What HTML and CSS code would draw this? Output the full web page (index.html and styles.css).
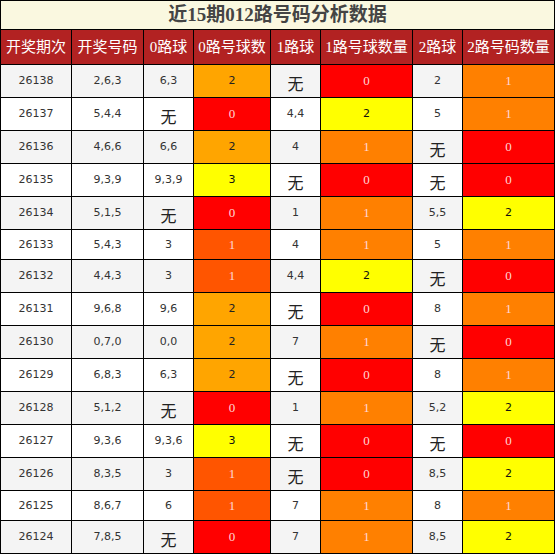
FILE: index.html
```html
<!DOCTYPE html>
<html lang="zh-CN">
<head>
  <meta charset="UTF-8">
  <meta name="viewport" content="width=device-width, initial-scale=1.0">
  <title>近15期012路号码分析数据</title>
  <link rel="stylesheet" href="styles.css">
</head>
<body>
<table class="road-table">
  <colgroup>
    <col class="w71"><col class="w72"><col class="w50"><col class="w77">
    <col class="w50"><col class="w92"><col class="w50"><col class="w92">
  </colgroup>
  <tr>
    <td colspan="8" class="title">近15期012路号码分析数据</td>
  </tr>
  <tr class="head">
    <th>开奖期次</th><th>开奖号码</th><th>0路球</th><th>0路号球数</th>
    <th>1路球</th><th>1路号球数量</th><th>2路球</th><th>2路号码数量</th>
  </tr>
  <tr class="odd">
    <td>26138</td><td>2,6,3</td><td>6,3</td><td class="oa">2</td>
    <td><span class="none">无</span></td><td class="red">0</td><td>2</td><td class="o8">1</td>
  </tr>
  <tr>
    <td>26137</td><td>5,4,4</td><td><span class="none">无</span></td><td class="red">0</td>
    <td>4,4</td><td class="yel">2</td><td>5</td><td class="o8">1</td>
  </tr>
  <tr class="odd">
    <td>26136</td><td>4,6,6</td><td>6,6</td><td class="oa">2</td>
    <td>4</td><td class="o8">1</td><td><span class="none">无</span></td><td class="red">0</td>
  </tr>
  <tr>
    <td>26135</td><td>9,3,9</td><td>9,3,9</td><td class="yel">3</td>
    <td><span class="none">无</span></td><td class="red">0</td><td><span class="none">无</span></td><td class="red">0</td>
  </tr>
  <tr class="odd">
    <td>26134</td><td>5,1,5</td><td><span class="none">无</span></td><td class="red">0</td>
    <td>1</td><td class="o8">1</td><td>5,5</td><td class="yel">2</td>
  </tr>
  <tr>
    <td>26133</td><td>5,4,3</td><td>3</td><td class="o5">1</td>
    <td>4</td><td class="o8">1</td><td>5</td><td class="o8">1</td>
  </tr>
  <tr class="odd">
    <td>26132</td><td>4,4,3</td><td>3</td><td class="o5">1</td>
    <td>4,4</td><td class="yel">2</td><td><span class="none">无</span></td><td class="red">0</td>
  </tr>
  <tr>
    <td>26131</td><td>9,6,8</td><td>9,6</td><td class="oa">2</td>
    <td><span class="none">无</span></td><td class="red">0</td><td>8</td><td class="o8">1</td>
  </tr>
  <tr class="odd">
    <td>26130</td><td>0,7,0</td><td>0,0</td><td class="oa">2</td>
    <td>7</td><td class="o8">1</td><td><span class="none">无</span></td><td class="red">0</td>
  </tr>
  <tr>
    <td>26129</td><td>6,8,3</td><td>6,3</td><td class="oa">2</td>
    <td><span class="none">无</span></td><td class="red">0</td><td>8</td><td class="o8">1</td>
  </tr>
  <tr class="odd">
    <td>26128</td><td>5,1,2</td><td><span class="none">无</span></td><td class="red">0</td>
    <td>1</td><td class="o8">1</td><td>5,2</td><td class="yel">2</td>
  </tr>
  <tr>
    <td>26127</td><td>9,3,6</td><td>9,3,6</td><td class="yel">3</td>
    <td><span class="none">无</span></td><td class="red">0</td><td><span class="none">无</span></td><td class="red">0</td>
  </tr>
  <tr class="odd">
    <td>26126</td><td>8,3,5</td><td>3</td><td class="o5">1</td>
    <td><span class="none">无</span></td><td class="red">0</td><td>8,5</td><td class="yel">2</td>
  </tr>
  <tr>
    <td>26125</td><td>8,6,7</td><td>6</td><td class="o5">1</td>
    <td>7</td><td class="o8">1</td><td>8</td><td class="o8">1</td>
  </tr>
  <tr class="odd">
    <td>26124</td><td>7,8,5</td><td><span class="none">无</span></td><td class="red">0</td>
    <td>7</td><td class="o8">1</td><td>8,5</td><td class="yel">2</td>
  </tr>
</table>
</body>
</html>
```

FILE: styles.css
```css
body{
  margin: 0;
  background: #fff;
}

.road-table{
  width: 555px;
  table-layout: fixed;
  border-collapse: collapse;
  font-family: "DejaVu Sans", "Noto Sans CJK SC", sans-serif;
  font-size: 11px;
  color: #333;
}

.w71{ width: 71px; }
.w72{ width: 72px; }
.w50{ width: 50px; }
.w77{ width: 77px; }
.w92{ width: 92px; }

.road-table td,
.road-table th{
  border: 1px solid #000;
  text-align: center;
  vertical-align: middle;
  padding: 0;
  height: 29px;
  line-height: 16px;
}

/* 标题行 */
.road-table .title{
  background: #faf8e0;
  color: #444;
  font-family: "Liberation Serif", "Noto Sans CJK SC", serif;
  font-weight: bold;
  font-size: 19px;
  line-height: 22px;
  height: 28px;
}

/* 表头 */
.head th{
  background: #b22222;
  color: #fff;
  font-family: "Liberation Serif", "Noto Sans CJK SC", serif;
  font-weight: normal;
  font-size: 15px;
  line-height: 20px;
  height: 34px;
  white-space: nowrap;
}

.odd td{
  background: #f4f4f4;
}

/* “无”字比数字大一号，行也高一些 */
.none{
  display: inline-block;
  vertical-align: top;
  font-family: "Noto Sans CJK SC", sans-serif;
  font-size: 16px;
  line-height: 32px;
  padding-top: 2px;
  height: 30px;
  color: #222;
}

/* 号球数颜色 */
.road-table .red,
.road-table .o5,
.road-table .o8{
  color: #ffd6d6;
  font-family: "Liberation Serif", serif;
  font-size: 13px;
}

.road-table .red{ background: #ff0000; }
.road-table .o5{ background: #ff5500; }
.road-table .o8{ background: #ff8000; }
.road-table .oa{ background: #ffa500; color: #222; }
.road-table .yel{ background: #ffff00; color: #111; }
```
